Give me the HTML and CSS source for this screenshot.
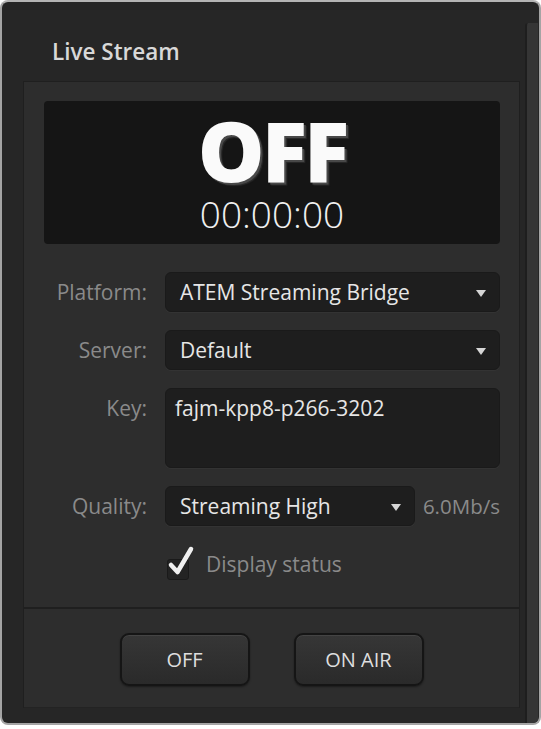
FILE: index.html
```html
<!DOCTYPE html>
<html lang="en">
<head>
<meta charset="utf-8">
<title>Live Stream</title>
<link rel="stylesheet" href="styles.css">
</head>
<body>
<div class="window">
  <div class="main">
    <h1 class="title">Live Stream</h1>
    <div class="panel">
      <div class="display">
        <div class="status">OFF</div>
        <div class="timer">00:00:00</div>
      </div>
      <div class="form">
        <div class="lbl">Platform:</div>
        <div class="select"><span>ATEM Streaming Bridge</span><i class="caret"></i></div>

        <div class="lbl">Server:</div>
        <div class="select"><span>Default</span><i class="caret"></i></div>

        <div class="lbl lbl-top">Key:</div>
        <div class="keybox">fajm-kpp8-p266-3202</div>

        <div class="lbl">Quality:</div>
        <div class="quality">
          <div class="select select-short"><span>Streaming High</span><i class="caret"></i></div>
          <span class="rate">6.0Mb/s</span>
        </div>

        <div></div>
        <div class="check-row">
          <span class="checkbox">
            <svg width="28" height="32" viewBox="0 0 28 32"><path d="M4 20 L10.5 27 L24 4" fill="none" stroke="#f0f0f0" stroke-width="4.5" stroke-linecap="round" stroke-linejoin="round"/></svg>
          </span>
          <span class="check-label">Display status</span>
        </div>
      </div>
      <div class="actions">
        <button class="btn">OFF</button>
        <button class="btn">ON AIR</button>
      </div>
    </div>
  </div>
  <div class="scroll"></div>
</div>
</body>
</html>
```

FILE: styles.css
```css
* { box-sizing: border-box; }

body {
  margin: 0;
  background: #ffffff;
  font-family: "Open Sans", "Noto Sans", sans-serif;
}

.window {
  width: 541px;
  height: 725px;
  border: 2px solid #a4a4a4;
  border-top-color: #b4b4b4;
  border-radius: 8px;
  background: #262626;
  display: flex;
  overflow: hidden;
}

.main {
  width: 523px;
  display: flex;
  flex-direction: column;
}

.title {
  margin: 0;
  height: 79px;
  padding: 36px 0 0 50px;
  font-size: 22.5px;
  line-height: 28px;
  font-weight: 600;
  color: #d8d8d8;
}

.panel {
  width: 497px;
  margin-left: 21px;
  background: #2d2d2d;
  border: 1px solid #1f1f1f;
  border-bottom-color: #232323;
  display: flex;
  flex-direction: column;
}

.display {
  margin: 19px 19px 0 20px;
  height: 143px;
  background: #151515;
  border-radius: 4px;
  padding-top: 7px;
  text-align: center;
  color: #fafafa;
}

.status {
  font-size: 84px;
  line-height: 84px;
  font-weight: 800;
  letter-spacing: -3px;
  text-shadow: 2px 2px 0 #484848, 3px 3px 1px #2a2a2a;
}

.timer {
  margin-top: 4px;
  font-size: 37px;
  line-height: 36px;
  font-weight: 300;
  color: #f0f0f0;
}

.form {
  margin-top: 28px;
  padding-right: 19px;
  display: grid;
  grid-template-columns: 123px 1fr;
  grid-template-rows: 40px 40px 80px 40px 40px;
  column-gap: 18px;
  row-gap: 18px;
}

.lbl {
  font-size: 21px;
  line-height: 40px;
  color: #8a8a8a;
  text-align: right;
}

.select {
  display: flex;
  align-items: center;
  justify-content: space-between;
  background: #1e1e1e;
  border: 1px solid #1a1a1a;
  border-radius: 6px;
  padding: 0 13px 0 14px;
  font-size: 21px;
  color: #e6e6e6;
  box-shadow: 0 1px 0 rgba(255,255,255,0.03);
}

.caret {
  width: 0;
  height: 0;
  border-left: 5px solid transparent;
  border-right: 5px solid transparent;
  border-top: 7px solid #d6d6d6;
  margin-top: 2px;
}

.keybox {
  background: #1e1e1e;
  border: 1px solid #1a1a1a;
  border-radius: 6px;
  padding: 0 9px;
  font-size: 21px;
  line-height: 38px;
  color: #e6e6e6;
  box-shadow: 0 1px 0 rgba(255,255,255,0.03);
}

.quality {
  display: flex;
  align-items: stretch;
  justify-content: space-between;
}

.select-short {
  width: 250px;
}

.rate {
  font-size: 20.5px;
  line-height: 40px;
  color: #8a8a8a;
}

.check-row {
  display: flex;
  align-items: center;
  padding-left: 2px;
}

.checkbox {
  position: relative;
  width: 22px;
  height: 21px;
  margin-top: 10px;
  background: #232323;
  border: 1px solid #1a1a1a;
  border-radius: 3px;
}

.checkbox svg {
  position: absolute;
  left: -1px;
  top: -15px;
}

.check-label {
  margin-left: 17px;
  font-size: 21px;
  color: #8a8a8a;
}

.actions {
  margin-top: 23px;
  border-top: 2px solid #1f1f1f;
  padding: 24px 0 21px;
  display: flex;
  justify-content: center;
  gap: 44px;
}

.btn {
  width: 130px;
  height: 53px;
  border: 2px solid #151515;
  border-radius: 9px;
  background: linear-gradient(#363636, #2a2a2a);
  box-shadow: inset 0 1px 0 rgba(255,255,255,0.07), 0 1px 2px rgba(0,0,0,0.4);
  font-family: "Open Sans", "Noto Sans", sans-serif;
  font-size: 20px;
  color: #dedede;
  padding: 0;
}

.scroll {
  width: 13px;
  margin-top: 21px;
  background: #353535;
  border-left: 2px solid #1e1e1e;
  border-top-left-radius: 3px;
}
```
